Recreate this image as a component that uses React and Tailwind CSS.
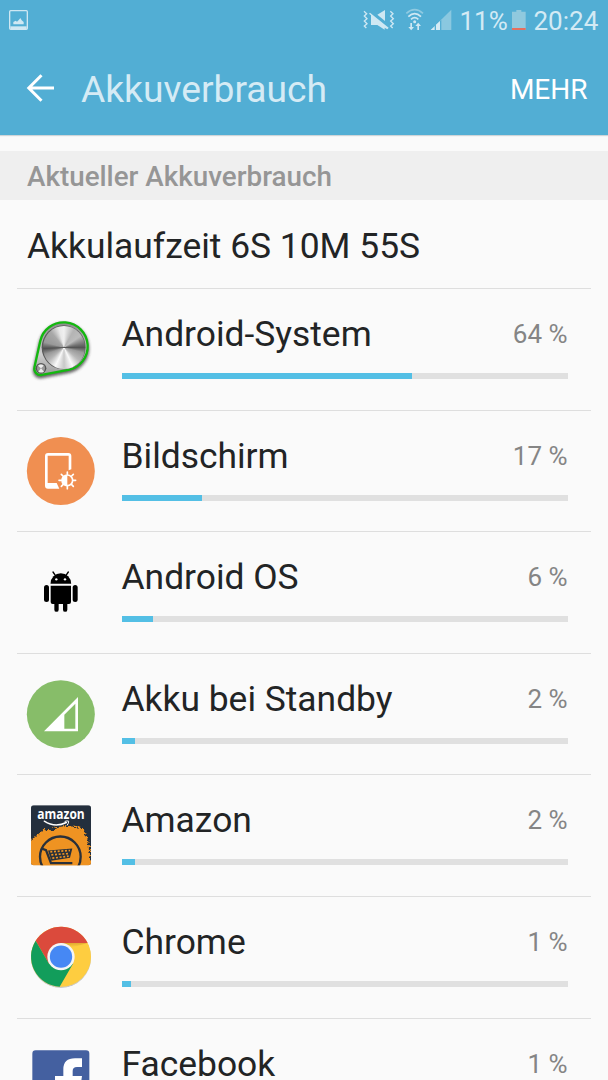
import React from "react";

const ICON = "block h-20 w-20 overflow-visible";

function SystemIcon() {
  return (
    <div className="relative h-20 w-20">
      <svg className={ICON} viewBox="18 9 240 240">
        <defs>
          <linearGradient id="plate" x1="0" y1="0" x2="0" y2="1">
            <stop offset="0" stopColor="#8a8a8a" />
            <stop offset="0.6" stopColor="#d0d0d0" />
            <stop offset="1" stopColor="#9b9b9b" />
          </linearGradient>
          <filter id="soft" x="-20%" y="-20%" width="140%" height="150%">
            <feGaussianBlur stdDeviation="5" />
          </filter>
        </defs>
        <path d="M75.7 108.5A72 72 0 1 1 159.5 194.7L80.6 209.7A19 19 0 0 1 58.4 186.9Z" transform="translate(0 6)" fill="#333" stroke="#333" strokeWidth="9" opacity="0.75" filter="url(#soft)" />
        <path d="M75.7 108.5A72 72 0 1 1 159.5 194.7L80.6 209.7A19 19 0 0 1 58.4 186.9Z" fill="url(#plate)" stroke="#13b80f" strokeWidth="7" />
        <circle cx="146" cy="127" r="66" fill="#5a5a5a" />
        <circle cx="78" cy="190" r="16" fill="#555" />
        <circle cx="78" cy="190" r="12" fill="#999" />
        <path d="M78 190L69 182Q78 175 86 182ZM78 190L70 200Q79 205 87 200Z" fill="#eee" />
      </svg>
      <div className="absolute left-[21.5px] top-[18px] h-[42.5px] w-[42.5px] rounded-full bg-[conic-gradient(from_0deg,#f0f0f0_0deg,#b4b4b4_30deg,#bcbcbc_55deg,#707070_80deg,#555555_90deg,#9a9a9a_105deg,#b8b8b8_130deg,#fafafa_155deg,#c8c8c8_180deg,#fafafa_205deg,#b6b6b6_230deg,#989898_250deg,#505050_267deg,#999999_285deg,#a8a8a8_320deg,#e8e8e8_345deg,#f0f0f0_360deg)]" />
    </div>
  );
}

function ScreenIcon() {
  return (
    <svg className={ICON} viewBox="18 14 240 240">
      <circle cx="137.5" cy="137" r="102" fill="#f08f51" />
      <path d="M99 83H160Q169 83 169 92V132L161 135V91H98V173H125L133 190H99Q90 190 90 181V92Q90 83 99 83Z" fill="#fff" />
      <g stroke="#fff" strokeWidth="5" strokeLinecap="round">
        <path d="M157 140V147M157 183V190M132 165H139M175 165H182M139 147L144 152M170 178L175 183M175 147L170 152M144 178L139 183" />
      </g>
      <circle cx="157" cy="165" r="16" fill="#f08f51" stroke="#fff" strokeWidth="5" />
      <path d="M157 149A16 16 0 0 0 157 181Z" fill="#fff" />
    </svg>
  );
}

function RobotIcon() {
  return (
    <svg className={ICON} viewBox="18 -11 240 240">
      <path d="M106.5 87A31 31.5 0 0 1 168.5 87Z" fill="#000" />
      <path d="M114 52L121 62M160 52L153 62" stroke="#000" strokeWidth="4" strokeLinecap="round" />
      <circle cx="124" cy="74" r="3.5" fill="#fafafa" />
      <circle cx="150" cy="74" r="3.5" fill="#fafafa" />
      <path d="M107 93H168V142Q168 148 162 148H157V165A6.5 6.5 0 0 1 144 165V148H131V165A6.5 6.5 0 0 1 118 165V148H113Q107 148 107 142Z" fill="#000" />
      <rect x="87" y="91" width="15" height="51" rx="7.5" />
      <rect x="173" y="91" width="15" height="51" rx="7.5" />
    </svg>
  );
}

function StandbyIcon() {
  return (
    <svg className={ICON} viewBox="18 8 240 240">
      <circle cx="137.5" cy="131.5" r="102" fill="#87bd69" />
      <path d="M189 80V183H87ZM181 100L148 133V175H181Z" fill="#fff" fillRule="evenodd" />
    </svg>
  );
}

function AmazonIcon() {
  return (
    <svg className={ICON} viewBox="18 -3.5 240 240">
      <defs>
        <clipPath id="tile">
          <rect x="48" y="30" width="180" height="180" rx="8" />
        </clipPath>
        <filter id="spray" x="-10%" y="-10%" width="120%" height="120%">
          <feTurbulence type="fractalNoise" baseFrequency="0.12" numOctaves="3" seed="4" />
          <feDisplacementMap in="SourceGraphic" scale="26" xChannelSelector="R" yChannelSelector="G" />
        </filter>
      </defs>
      <g clipPath="url(#tile)">
        <rect x="48" y="30" width="180" height="180" fill="#242f3d" />
        <path d="M40 225V138Q60 128 72 115Q90 97 115 103Q140 88 165 94Q195 92 208 110Q222 130 222 165Q230 185 232 225Z" fill="#ef9322" filter="url(#spray)" />
        <circle cx="136" cy="185" r="61" fill="#ef9322" stroke="#29303a" strokeWidth="7" />
        <path d="M80 160L93 165L108 204H172" fill="none" stroke="#29303a" strokeWidth="7" />
        <path d="M99 166L172 160L165 188L109 197Z" fill="#29303a" />
        <path d="M106 170L165 166M109 179L163 175M112 189L161 183" stroke="#ef9322" strokeWidth="5" strokeDasharray="6 5" />
        <path d="M88 78Q120 99 154 82" fill="none" stroke="#fff" strokeWidth="4.5" strokeLinecap="round" />
        <path d="M149 79Q156 76 161 78Q161 85 156 91" fill="none" stroke="#fff" strokeWidth="3" />
        <text x="67" y="73" textLength="142" lengthAdjust="spacingAndGlyphs" fill="#fff" fontFamily="Open Sans, sans-serif" fontWeight="700" fontSize="45">amazon</text>
      </g>
    </svg>
  );
}

function ChromeIcon() {
  return (
    <svg className={ICON} viewBox="18 3 240 240">
      <defs>
        <filter id="chromeShadow" x="-10%" y="-10%" width="120%" height="125%">
          <feDropShadow dx="0" dy="2" stdDeviation="2" floodOpacity="0.4" />
        </filter>
        <linearGradient id="fold" x1="0" y1="0" x2="0.2" y2="1">
          <stop offset="0" stopColor="#dda52e" />
          <stop offset="1" stopColor="#fecd41" />
        </linearGradient>
      </defs>
      <circle cx="138" cy="125" r="90" fill="#fecd41" filter="url(#chromeShadow)" />
      <path d="M138 84H218A90 90 0 0 0 62 77L102 146Z" fill="#db4a3c" />
      <path d="M62 77A90 90 0 0 0 134 215L174 146L102 146Z" fill="#129d5b" />
      <path d="M138 84H218L173 97Z" fill="url(#fold)" />
      <circle cx="138" cy="125" r="41" fill="#f5f5f5" />
      <circle cx="138" cy="125" r="33.5" fill="#4688f4" />
    </svg>
  );
}

function FacebookIcon() {
  return (
    <svg className={ICON} viewBox="18 368 240 240">
      <rect x="52" y="405" width="171" height="171" rx="10" fill="#4460a0" />
      <path d="M145 576V510H120V482H145V462Q145 429 180 429H201V455H186Q173 455 173 467V482H201L197 510H173V576Z" fill="#fff" />
    </svg>
  );
}

function StatusBar() {
  return (
    <div className="flex h-[42px] items-start text-[#d3eaf4]">
      <svg className="ml-2 mt-2 h-6 w-6" viewBox="24 24 72 72">
        <rect x="29" y="32" width="53" height="56" rx="3" fill="none" stroke="#cfe8f3" strokeWidth="4" />
        <path d="M31 79H80V87H31Z" fill="#cfe8f3" />
        <path d="M40 73V66L47 62L51 65L57 59L61 54L65 61L71 66V73Z" fill="#cfe8f3" />
      </svg>
      <svg className="ml-[328px] h-[42px] w-[95px] shrink-0" viewBox="30 0 285 126">
        <g fill="none" stroke="#cfe8f3" strokeWidth="4">
          <path d="M42 34L50 41L43 48L51 56L43 63L51 71L43 78L49 84" />
          <path d="M121 34L129 41L122 48L130 56L122 63L130 71L122 78L128 84" />
        </g>
        <path d="M57 41L60 38L116 83L112 88L104 83V89L82 75H63V46ZM82 44L105 30V63Z" fill="#cfe8f3" />
        <g fill="none" strokeWidth="5">
          <path d="M169 40Q194 18 219 40" stroke="#8fcae1" />
          <path d="M175 50Q194 32 213 50" stroke="#cfe8f3" />
          <path d="M183 58Q194 48 205 58" stroke="#cfe8f3" />
        </g>
        <circle cx="194" cy="65" r="4.5" fill="#cfe8f3" />
        <path d="M181 69H186V81H192L183.5 91L175 81H181ZM202 90H207V78H213L204.5 68L196 78H202Z" fill="#cfe8f3" />
        <path d="M242 90L304 29V90Z" fill="#8ac8e0" />
        <path d="M242 90L255 78V90ZM258 90V74L271 62V90Z" fill="#d5ebf5" />
        <path d="M254 77V90H258V74ZM270 62V90H274V60Z" fill="#53aed4" />
      </svg>
      <span className="ml-[4.5px] mt-[5px] w-[48px] whitespace-nowrap text-[26px] leading-[32px]">11%</span>
      <svg className="ml-[4px] mt-[9px] h-[22px] w-[14px] shrink-0" viewBox="0 0 42 66">
        <path d="M13 3H28V8H41V63H0V8H13Z" fill="#90c9de" />
        <path d="M0 57H41V63H0Z" fill="#e66f5e" />
      </svg>
      <span className="ml-[8px] mt-[5px] whitespace-nowrap text-[26px] leading-[32px]">20:24</span>
    </div>
  );
}

const rows = [
  { name: "Android-System", percent: 64, width: 290, Icon: SystemIcon },
  { name: "Bildschirm", percent: 17, width: 80.5, Icon: ScreenIcon },
  { name: "Android OS", percent: 6, width: 31.5, Icon: RobotIcon },
  { name: "Akku bei Standby", percent: 2, width: 13.5, Icon: StandbyIcon },
  { name: "Amazon", percent: 2, width: 13.5, Icon: AmazonIcon },
  { name: "Chrome", percent: 1, width: 9, Icon: ChromeIcon },
  { name: "Facebook", percent: 1, width: 9, Icon: FacebookIcon },
];

function UsageRow({ name, percent, width, Icon }) {
  return (
    <li className="flex h-[121.6px] items-start border-t border-[#dedede]">
      <div className="ml-1 mt-[19px] shrink-0">
        <Icon />
      </div>
      <div className="ml-[20.5px] w-[446px]">
        <div className="mt-[23px] flex h-[44px] items-start justify-between whitespace-nowrap">
          <span className="text-[35.4px] leading-[44.4px] text-[#222425]">{name}</span>
          <span className="text-[26px] leading-[44px] text-[#858585]">{percent} %</span>
        </div>
        <div className="mt-[17px] h-[6px] bg-[#e0e0e0]">
          <div className="h-full bg-[#53bfe5]" style={{ width }} />
        </div>
      </div>
    </li>
  );
}

export default function App() {
  return (
    <div className="h-[1080px] w-[608px] overflow-hidden bg-[#fafafa] font-['Roboto',sans-serif]">
      <header className="h-[135px] bg-[#52aed4] shadow-[0_1px_1px_#cfd5d8]">
        <StatusBar />
        <div className="flex h-[93px] items-start">
          <svg className="ml-[26px] mt-[31px] h-[30px] w-[30px] shrink-0" viewBox="0 0 30 30">
            <path d="M28 15H3M15.5 2.3L2.8 15L15.5 27.7" fill="none" stroke="#fff" strokeWidth="3" />
          </svg>
          <h1 className="ml-[25px] mt-[25px] whitespace-nowrap text-[37.2px] leading-[44px] text-[#d5ebf5]">Akkuverbrauch</h1>
          <button className="ml-auto mr-[20.5px] mt-[26px] text-[28px] leading-[44px] text-white">MEHR</button>
        </div>
      </header>
      <h2 className="mt-4 flex h-[49px] items-center bg-[#efefef] pl-[27px] pt-[3px] text-[27.8px] font-medium text-[#969696]">Aktueller Akkuverbrauch</h2>
      <main className="px-[17px]">
        <div className="flex h-[88px] items-center whitespace-nowrap pl-[10px] pt-[6px] text-[35.4px] text-[#222425]">Akkulaufzeit 6S 10M 55S</div>
        <ul>
          {rows.map((row) => (
            <UsageRow key={row.name} {...row} />
          ))}
        </ul>
      </main>
    </div>
  );
}
